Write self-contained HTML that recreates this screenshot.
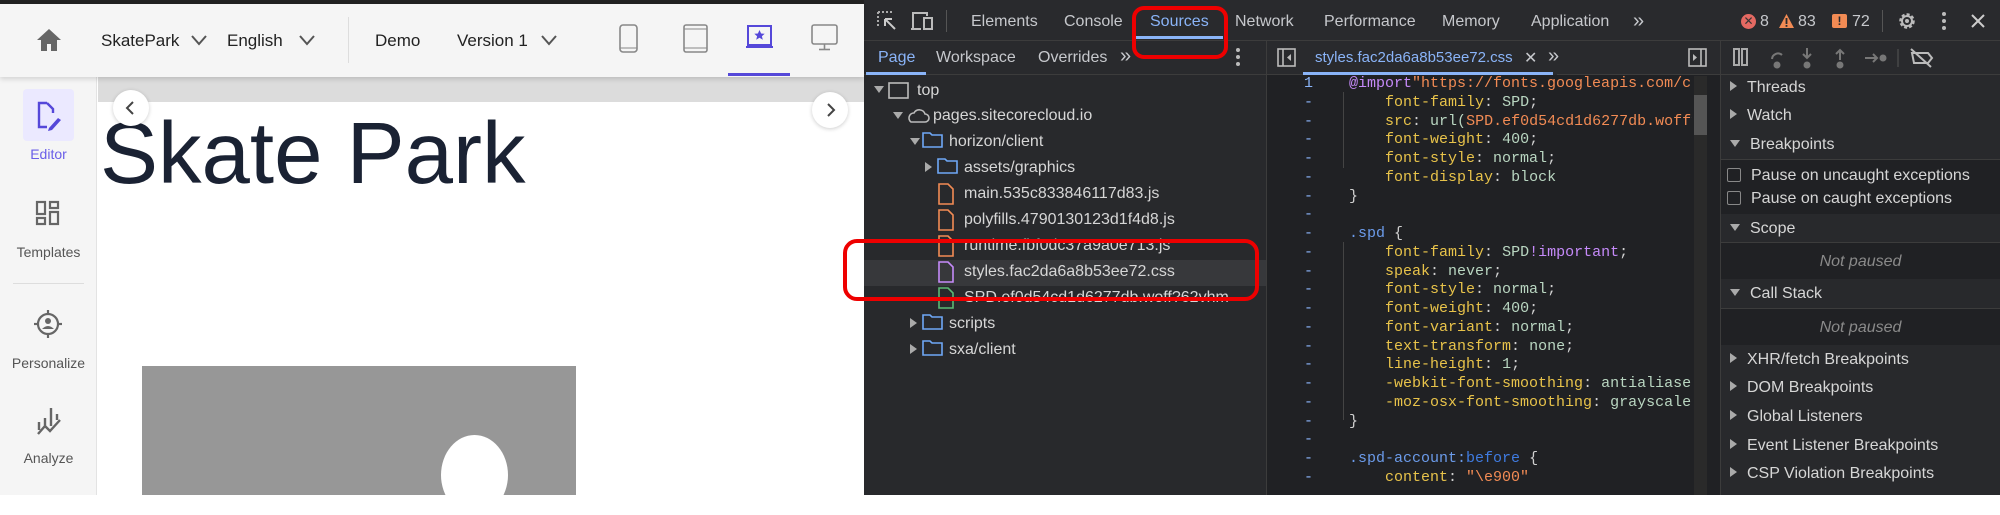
<!DOCTYPE html>
<html><head><meta charset="utf-8"><style>
*{margin:0;padding:0;box-sizing:border-box}
body{width:2000px;height:495px;overflow:hidden;background:#fff;position:relative;font-family:"Liberation Sans",sans-serif}
.a{position:absolute;white-space:nowrap}
.t{font-size:17px;color:#222}
.dv{font-size:16px;color:#c6c8cc}
.code{font-family:"Liberation Mono",monospace;font-size:15px}
.code div{white-space:pre;height:18.75px}
.ln{color:#8ab4f8}
.p{color:#e8c34a}.v{color:#b9d6c1}.s{color:#f28b54}.im{color:#c58af9}.sel{color:#6b9bea}.w{color:#d0d0d0}
.rp{font-size:16px;color:#d6d6d6}
.tri{display:inline-block;width:0;height:0;border-top:5px solid transparent;border-bottom:5px solid transparent;border-left:7px solid #aaa;margin-right:10px;vertical-align:1px}
.trd{display:inline-block;width:0;height:0;border-left:5px solid transparent;border-right:5px solid transparent;border-top:7px solid #aaa;margin-right:10px;vertical-align:2px}
</style></head><body>
<!-- LEFT APP -->
<div class="a" style="left:0;top:0;width:864px;height:4px;background:#222"></div>
<div class="a" style="left:0;top:4px;width:864px;height:73px;background:#f5f5f5;box-shadow:0 2px 5px rgba(0,0,0,.15);z-index:2"></div>
<div style="position:absolute;left:0;top:0;width:864px;height:77px;z-index:3">
<svg class="a" style="left:36px;top:28px" width="26" height="24" viewBox="0 0 26 24"><path d="M13 1L1 12h4v11h6v-7h4v7h6V12h4z" fill="#666"/></svg>
<div class="a t" style="left:101px;top:31px">SkatePark</div>
<svg class="a" style="left:191px;top:34px" width="16" height="12"><path d="M1 2l7 8 7-8" stroke="#555" stroke-width="2" fill="none"/></svg>
<div class="a t" style="left:227px;top:31px">English</div>
<svg class="a" style="left:299px;top:34px" width="16" height="12"><path d="M1 2l7 8 7-8" stroke="#555" stroke-width="2" fill="none"/></svg>
<div class="a" style="left:348px;top:17px;width:1px;height:46px;background:#ddd"></div>
<div class="a t" style="left:375px;top:31px">Demo</div>
<div class="a t" style="left:457px;top:31px">Version 1</div>
<svg class="a" style="left:541px;top:34px" width="16" height="12"><path d="M1 2l7 8 7-8" stroke="#555" stroke-width="2" fill="none"/></svg>
<svg class="a" style="left:619px;top:24px" width="20" height="30"><rect x="1" y="1" width="17" height="27" rx="3" fill="none" stroke="#888" stroke-width="1.6"/><line x1="1" y1="24" x2="18" y2="24" stroke="#888"/></svg>
<svg class="a" style="left:683px;top:24px" width="26" height="30"><rect x="1" y="1" width="23" height="27" rx="2" fill="none" stroke="#888" stroke-width="1.6"/><line x1="1" y1="5" x2="24" y2="5" stroke="#888"/><line x1="1" y1="24" x2="24" y2="24" stroke="#888"/></svg>
<svg class="a" style="left:745px;top:25px" width="30" height="24"><rect x="3" y="1" width="23" height="19" fill="none" stroke="#5548d9" stroke-width="2"/><line x1="1" y1="22" x2="28" y2="22" stroke="#5548d9" stroke-width="2"/><path d="M14.5 5l1.6 3.5 3.6.3-2.8 2.4.9 3.6-3.3-2-3.3 2 .9-3.6-2.8-2.4 3.6-.3z" fill="#5548d9"/></svg>
<div class="a" style="left:728px;top:73px;width:62px;height:3px;background:#5548d9"></div>
<svg class="a" style="left:810px;top:24px" width="30" height="28"><rect x="2" y="1" width="25" height="19" rx="2" fill="none" stroke="#888" stroke-width="1.6"/><line x1="14.5" y1="20" x2="14.5" y2="25" stroke="#888" stroke-width="1.6"/><line x1="9" y1="25.5" x2="20" y2="25.5" stroke="#888" stroke-width="1.6"/></svg>
</div>
<!-- sidebar -->
<div class="a" style="left:0;top:77px;width:97px;height:418px;background:#f5f5f5;border-right:1px solid #e3e3e3"></div>
<div class="a" style="left:23px;top:89px;width:51px;height:52px;background:#ebe9ff;border-radius:4px"></div>
<svg class="a" style="left:35px;top:101px" width="28" height="30"><path d="M12 2H4v24h8M12 2l6 6v4" fill="none" stroke="#5548d9" stroke-width="2.4"/><path d="M14 27l9-10 3 2-9 10-4 1z" fill="#5548d9"/></svg>
<div class="a" style="left:0;width:97px;text-align:center;top:146px;font-size:14px;color:#6a5ee8">Editor</div>
<svg class="a" style="left:35px;top:200px" width="26" height="26"><g fill="none" stroke="#666" stroke-width="2.2"><rect x="2" y="2" width="8" height="12"/><rect x="15" y="2" width="8" height="6"/><rect x="2" y="18" width="8" height="6"/><rect x="15" y="12" width="8" height="12"/></g></svg>
<div class="a" style="left:0;width:97px;text-align:center;top:244px;font-size:14px;color:#555">Templates</div>
<div class="a" style="left:13px;top:283px;width:71px;height:1px;background:#ddd"></div>
<svg class="a" style="left:33px;top:309px" width="30" height="30"><g fill="none" stroke="#666" stroke-width="2.2"><circle cx="15" cy="15" r="10"/><line x1="15" y1="1" x2="15" y2="5"/><line x1="15" y1="25" x2="15" y2="29"/><line x1="1" y1="15" x2="5" y2="15"/><line x1="25" y1="15" x2="29" y2="15"/></g><circle cx="15" cy="12" r="3" fill="#666"/><path d="M9 20q6-6 12 0z" fill="#666"/></svg>
<div class="a" style="left:0;width:97px;text-align:center;top:355px;font-size:14px;color:#555">Personalize</div>
<svg class="a" style="left:36px;top:406px" width="26" height="30"><g fill="none" stroke="#666" stroke-width="2.4"><path d="M3 16v8M9 12v10M15 2v18M21 8v6M2 28l7-8 5 5 10-11"/></g></svg>
<div class="a" style="left:0;width:97px;text-align:center;top:450px;font-size:14px;color:#555">Analyze</div>
<!-- canvas -->
<div class="a" style="left:98px;top:77px;width:766px;height:25px;background:#dcdcdc"></div>
<div class="a" style="left:98px;top:102px;width:766px;height:393px;background:#fff"></div>
<div class="a" style="left:100px;top:104px;font-size:87px;color:#1a2233;z-index:1">Skate Park</div>
<div class="a" style="left:113px;top:90px;width:36px;height:36px;border-radius:50%;background:#fff;box-shadow:0 1px 4px rgba(0,0,0,.2);z-index:2"></div>
<svg class="a" style="left:124px;top:100px;z-index:3" width="12" height="16"><path d="M9 2L3 8l6 6" stroke="#444" stroke-width="2" fill="none"/></svg>
<div class="a" style="left:812px;top:92px;width:36px;height:36px;border-radius:50%;background:#fff;box-shadow:0 1px 4px rgba(0,0,0,.2);z-index:2"></div>
<svg class="a" style="left:825px;top:102px;z-index:3" width="12" height="16"><path d="M3 2l6 6-6 6" stroke="#444" stroke-width="2" fill="none"/></svg>
<div class="a" style="left:142px;top:366px;width:434px;height:129px;background:#979797"></div>
<div class="a" style="left:441px;top:435px;width:67px;height:80px;border-radius:50%;background:#fff"></div>
<!-- DEVTOOLS -->
<div class="a" style="left:864px;top:0;width:1136px;height:495px;background:#202124"></div>
<div class="a" style="left:864px;top:0;width:1136px;height:41px;background:#292a2d;border-bottom:1px solid #3c3c3c"></div>
<div class="a" style="left:864px;top:41px;width:1136px;height:34px;background:#292a2d;border-bottom:1px solid #3c3c3c"></div>
<div class="a" style="left:864px;top:75px;width:402px;height:420px;background:#28292c"></div>
<svg class="a" style="left:876px;top:10px" width="22" height="22"><g fill="none" stroke="#aaa" stroke-width="2" stroke-dasharray="2 2"><path d="M2 2h14M2 2v14"/></g><path d="M9 9l10 10M9 9v7M9 9h7" stroke="#ccc" stroke-width="2" fill="none"/></svg>
<svg class="a" style="left:910px;top:10px" width="26" height="22"><path d="M3 19V3h14v3" fill="none" stroke="#bbb" stroke-width="2"/><path d="M1 19h10" stroke="#bbb" stroke-width="2"/><rect x="14" y="8" width="8" height="11" fill="none" stroke="#bbb" stroke-width="2"/></svg>
<div class="a" style="left:946px;top:10px;width:1px;height:22px;background:#555"></div>
<div class="a dv" style="left:971px;top:13px">Elements</div>
<div class="a dv" style="left:1064px;top:13px">Console</div>
<div class="a dv" style="left:1150px;top:13px;color:#8ab4f8">Sources</div>
<div class="a" style="left:1135px;top:36px;width:88px;height:3px;background:#8ab4f8"></div>
<div class="a dv" style="left:1235px;top:13px">Network</div>
<div class="a dv" style="left:1324px;top:13px">Performance</div>
<div class="a dv" style="left:1442px;top:13px">Memory</div>
<div class="a dv" style="left:1531px;top:13px">Application</div>
<div class="a dv" style="left:1633px;top:10px;font-size:20px">»</div>
<div class="a" style="left:1741px;top:14px;width:15px;height:15px;border-radius:50%;background:#e46962;color:#333;font-size:12px;text-align:center;line-height:15px">✕</div>
<div class="a dv" style="left:1760px;top:13px">8</div>
<svg class="a" style="left:1778px;top:13px" width="17" height="16"><path d="M8.5 1L16 15H1z" fill="#f28b54"/><rect x="7.6" y="5" width="1.8" height="6" fill="#292a2d"/><rect x="7.6" y="12" width="1.8" height="1.8" fill="#292a2d"/></svg>
<div class="a dv" style="left:1798px;top:13px">83</div>
<div class="a" style="left:1832px;top:14px;width:15px;height:14px;background:#f28b54;border-radius:2px;color:#292a2d;font-size:12px;font-weight:bold;text-align:center;line-height:14px">!</div>
<div class="a dv" style="left:1852px;top:13px">72</div>
<div class="a" style="left:1882px;top:10px;width:1px;height:22px;background:#555"></div>
<svg class="a" style="left:1896px;top:10px" width="22" height="22"><circle cx="11" cy="11" r="6.5" fill="none" stroke="#bbb" stroke-width="2.5" stroke-dasharray="3 2"/><circle cx="11" cy="11" r="5" fill="none" stroke="#bbb" stroke-width="2"/><circle cx="11" cy="11" r="2" fill="#bbb"/></svg>
<svg class="a" style="left:1940px;top:11px" width="8" height="20"><circle cx="4" cy="3" r="2" fill="#bbb"/><circle cx="4" cy="10" r="2" fill="#bbb"/><circle cx="4" cy="17" r="2" fill="#bbb"/></svg>
<svg class="a" style="left:1970px;top:13px" width="16" height="16"><path d="M2 2l12 12M14 2L2 14" stroke="#ccc" stroke-width="2"/></svg>
<!-- second row -->
<div class="a dv" style="left:878px;top:49px;color:#8ab4f8">Page</div>
<div class="a" style="left:866px;top:72px;width:60px;height:3px;background:#8ab4f8"></div>
<div class="a dv" style="left:936px;top:49px">Workspace</div>
<div class="a dv" style="left:1038px;top:49px">Overrides</div>
<div class="a dv" style="left:1120px;top:45px;font-size:20px">»</div>
<svg class="a" style="left:1234px;top:47px" width="8" height="20"><circle cx="4" cy="3" r="2" fill="#bbb"/><circle cx="4" cy="10" r="2" fill="#bbb"/><circle cx="4" cy="17" r="2" fill="#bbb"/></svg>
<div class="a" style="left:1266px;top:41px;width:1px;height:454px;background:#3c3c3c"></div>
<svg class="a" style="left:1277px;top:48px" width="20" height="20"><rect x="1" y="1" width="17" height="17" fill="none" stroke="#bbb" stroke-width="1.6"/><line x1="6" y1="1" x2="6" y2="18" stroke="#bbb" stroke-width="1.6"/><path d="M14 6l-4 3.5 4 3.5z" fill="#bbb"/></svg>
<div class="a" style="left:1303px;top:41px;width:254px;height:34px;background:#292a2d"></div>
<div class="a dv" style="left:1315px;top:49px;color:#8ab4f8;font-size:15px">styles.fac2da6a8b53ee72.css</div>
<div class="a" style="left:1303px;top:72px;width:250px;height:3px;background:#8ab4f8"></div>
<div class="a dv" style="left:1524px;top:48px">✕</div>
<div class="a dv" style="left:1548px;top:45px;font-size:20px">»</div>
<svg class="a" style="left:1688px;top:48px" width="20" height="20"><rect x="1" y="1" width="17" height="17" fill="none" stroke="#bbb" stroke-width="1.6"/><line x1="13" y1="1" x2="13" y2="18" stroke="#bbb" stroke-width="1.6"/><path d="M5 6l4 3.5-4 3.5z" fill="#bbb"/></svg>
<div class="a" style="left:1720px;top:41px;width:1px;height:454px;background:#3c3c3c"></div>
<svg class="a" style="left:1732px;top:47px" width="260" height="22"><g stroke="#aaa" stroke-width="2" fill="none"><rect x="2" y="2" width="5" height="16"/><rect x="10" y="2" width="5" height="16"/></g><g stroke="#777" stroke-width="2" fill="#777"><path d="M40 12a6 6 0 0 1 10-4" fill="none"/><circle cx="45" cy="18" r="2.5"/><path d="M75 1v10M71 7l4 4 4-4" fill="none"/><circle cx="75" cy="18" r="2.5"/><path d="M108 13V3M104 7l4-4 4 4" fill="none"/><circle cx="108" cy="18" r="2.5"/><path d="M133 11h12M141 7l4 4-4 4" fill="none"/><circle cx="151" cy="11" r="2.5"/></g><line x1="166" y1="2" x2="166" y2="20" stroke="#555"/><path d="M180 6h16l4 5-4 5h-14zM179 2l20 18" stroke="#bbb" stroke-width="2" fill="none"/></svg>
<!-- tree -->
<div class="a" style="left:864px;top:260px;width:402px;height:26px;background:#37383b"></div>
<div style="position:absolute;left:0;top:0;font-size:16px;color:#d6d6d6">
<div class="a" style="left:874px;top:82px"><span class="trd"></span></div>
<svg class="a" style="left:888px;top:82px" width="22" height="18"><rect x="1" y="1" width="19" height="15" fill="none" stroke="#bbb" stroke-width="1.6"/></svg>
<div class="a" style="left:917px;top:82px">top</div>
<div class="a" style="left:893px;top:108px"><span class="trd"></span></div>
<svg class="a" style="left:906px;top:106px" width="24" height="18"><path d="M5 16h14a4 4 0 0 0 0-8 6 6 0 0 0-11-1 5 5 0 0 0-3 9z" fill="none" stroke="#bbb" stroke-width="1.6"/></svg>
<div class="a" style="left:933px;top:107px">pages.sitecorecloud.io</div>
<div class="a" style="left:910px;top:134px"><span class="trd"></span></div>
<svg class="a" style="left:922px;top:131px" width="22" height="18"><path d="M1 2h7l2 2h10v12H1z" fill="none" stroke="#6fa8f7" stroke-width="1.6"/></svg>
<div class="a" style="left:949px;top:133px">horizon/client</div>
<div class="a" style="left:925px;top:160px"><span class="tri"></span></div>
<svg class="a" style="left:937px;top:157px" width="22" height="18"><path d="M1 2h7l2 2h10v12H1z" fill="none" stroke="#6fa8f7" stroke-width="1.6"/></svg>
<div class="a" style="left:964px;top:159px">assets/graphics</div>
<svg class="a" style="left:938px;top:183px" width="16" height="22"><path d="M1 1h9l5 5v15H1z" fill="none" stroke="#f28b54" stroke-width="1.6"/></svg>
<div class="a" style="left:964px;top:185px">main.535c833846117d83.js</div>
<svg class="a" style="left:938px;top:209px" width="16" height="22"><path d="M1 1h9l5 5v15H1z" fill="none" stroke="#f28b54" stroke-width="1.6"/></svg>
<div class="a" style="left:964px;top:211px">polyfills.4790130123d1f4d8.js</div>
<svg class="a" style="left:938px;top:235px" width="16" height="22"><path d="M1 1h9l5 5v15H1z" fill="none" stroke="#f28b54" stroke-width="1.6"/></svg>
<div class="a" style="left:964px;top:237px">runtime.fbf0dc37a9a0e713.js</div>
<svg class="a" style="left:938px;top:261px" width="16" height="22"><path d="M1 1h9l5 5v15H1z" fill="none" stroke="#c58af9" stroke-width="1.6"/></svg>
<div class="a" style="left:964px;top:263px">styles.fac2da6a8b53ee72.css</div>
<svg class="a" style="left:938px;top:287px" width="16" height="22"><path d="M1 1h9l5 5v15H1z" fill="none" stroke="#5bb974" stroke-width="1.6"/></svg>
<div class="a" style="left:964px;top:289px">SPD.ef0d54cd1d6277db.woff?62vhm</div>
<div class="a" style="left:910px;top:316px"><span class="tri"></span></div>
<svg class="a" style="left:922px;top:313px" width="22" height="18"><path d="M1 2h7l2 2h10v12H1z" fill="none" stroke="#6fa8f7" stroke-width="1.6"/></svg>
<div class="a" style="left:949px;top:315px">scripts</div>
<div class="a" style="left:910px;top:342px"><span class="tri"></span></div>
<svg class="a" style="left:922px;top:339px" width="22" height="18"><path d="M1 2h7l2 2h10v12H1z" fill="none" stroke="#6fa8f7" stroke-width="1.6"/></svg>
<div class="a" style="left:949px;top:341px">sxa/client</div>
</div>
<!-- red boxes -->
<div class="a" style="left:1132px;top:6px;width:96px;height:53px;border:4px solid #e00;border-radius:12px;z-index:5"></div>
<div class="a" style="left:843px;top:239px;width:416px;height:62px;border:4px solid #e00;border-radius:14px;z-index:5"></div>
<!-- code -->
<div class="a" style="left:1694px;top:76px;width:13px;height:419px;background:#2a2a2a"></div>
<div class="a" style="left:1694px;top:95px;width:13px;height:40px;background:#555"></div>
<div class="a" style="left:1343px;top:92px;width:1px;height:76px;background:#444"></div>
<div class="a" style="left:1343px;top:242px;width:1px;height:178px;background:#444"></div>
<div class="code" style="position:absolute;left:1304px;top:75px;line-height:18.75px;width:388px;overflow:hidden"><div><span class="ln">1    </span><span class="im">@import</span><span class="s">"https://fonts.googleapis.com/css?</span></div><div><span class="ln">-        </span><span class="p">font-family</span><span class="w">: </span><span class="v">SPD</span><span class="w">;</span></div><div><span class="ln">-        </span><span class="p">src</span><span class="w">: </span><span class="v">url(</span><span class="s">SPD.ef0d54cd1d6277db.woff?62</span></div><div><span class="ln">-        </span><span class="p">font-weight</span><span class="w">: </span><span class="v">400</span><span class="w">;</span></div><div><span class="ln">-        </span><span class="p">font-style</span><span class="w">: </span><span class="v">normal</span><span class="w">;</span></div><div><span class="ln">-        </span><span class="p">font-display</span><span class="w">: </span><span class="v">block</span></div><div><span class="ln">-    </span><span class="w">}</span></div><div><span class="ln">-</span></div><div><span class="ln">-    </span><span class="sel">.spd</span><span class="w"> {</span></div><div><span class="ln">-        </span><span class="p">font-family</span><span class="w">: </span><span class="v">SPD</span><span class="im">!important</span><span class="w">;</span></div><div><span class="ln">-        </span><span class="p">speak</span><span class="w">: </span><span class="v">never</span><span class="w">;</span></div><div><span class="ln">-        </span><span class="p">font-style</span><span class="w">: </span><span class="v">normal</span><span class="w">;</span></div><div><span class="ln">-        </span><span class="p">font-weight</span><span class="w">: </span><span class="v">400</span><span class="w">;</span></div><div><span class="ln">-        </span><span class="p">font-variant</span><span class="w">: </span><span class="v">normal</span><span class="w">;</span></div><div><span class="ln">-        </span><span class="p">text-transform</span><span class="w">: </span><span class="v">none</span><span class="w">;</span></div><div><span class="ln">-        </span><span class="p">line-height</span><span class="w">: </span><span class="v">1</span><span class="w">;</span></div><div><span class="ln">-        </span><span class="p">-webkit-font-smoothing</span><span class="w">: </span><span class="v">antialiased</span><span class="w">;</span></div><div><span class="ln">-        </span><span class="p">-moz-osx-font-smoothing</span><span class="w">: </span><span class="v">grayscale</span></div><div><span class="ln">-    </span><span class="w">}</span></div><div><span class="ln">-</span></div><div><span class="ln">-    </span><span class="sel">.spd-account:</span><span style="color:#3f7be0">before</span><span class="w"> {</span></div><div><span class="ln">-        </span><span class="p">content</span><span class="w">: </span><span class="s">"\e900"</span></div></div>
<!-- right panel -->
<div class="a" style="left:1721px;top:75px;width:279px;height:420px;background:#28292c"></div>
<div class="a" style="left:1721px;top:159px;width:279px;height:1px;background:#3c3c3c"></div>
<div class="a" style="left:1721px;top:160px;width:279px;height:54px;background:#202124"></div>
<div class="a" style="left:1721px;top:242px;width:279px;height:1px;background:#3c3c3c"></div>
<div class="a" style="left:1721px;top:243px;width:279px;height:36px;background:#202124"></div>
<div class="a" style="left:1721px;top:308px;width:279px;height:1px;background:#3c3c3c"></div>
<div class="a" style="left:1721px;top:309px;width:279px;height:36px;background:#202124"></div>
<div class="rp">
<div class="a" style="left:1730px;top:79px"><span class="tri"></span>Threads</div>
<div class="a" style="left:1730px;top:107px"><span class="tri"></span>Watch</div>
<div class="a" style="left:1730px;top:136px"><span class="trd"></span>Breakpoints</div>
<div class="a" style="left:1727px;top:167px"><span style="display:inline-block;width:14px;height:14px;border:1.5px solid #888;border-radius:2px;margin-right:10px;vertical-align:-2px"></span>Pause on uncaught exceptions</div>
<div class="a" style="left:1727px;top:190px"><span style="display:inline-block;width:14px;height:14px;border:1.5px solid #888;border-radius:2px;margin-right:10px;vertical-align:-2px"></span>Pause on caught exceptions</div>
<div class="a" style="left:1730px;top:220px"><span class="trd"></span>Scope</div>
<div class="a" style="left:1721px;width:279px;text-align:center;top:253px;font-style:italic;color:#8a8a8a">Not paused</div>
<div class="a" style="left:1730px;top:285px"><span class="trd"></span>Call Stack</div>
<div class="a" style="left:1721px;width:279px;text-align:center;top:319px;font-style:italic;color:#8a8a8a">Not paused</div>
<div class="a" style="left:1730px;top:351px"><span class="tri"></span>XHR/fetch Breakpoints</div>
<div class="a" style="left:1730px;top:379px"><span class="tri"></span>DOM Breakpoints</div>
<div class="a" style="left:1730px;top:408px"><span class="tri"></span>Global Listeners</div>
<div class="a" style="left:1730px;top:437px"><span class="tri"></span>Event Listener Breakpoints</div>
<div class="a" style="left:1730px;top:465px"><span class="tri"></span>CSP Violation Breakpoints</div>
</div>
</body></html>
